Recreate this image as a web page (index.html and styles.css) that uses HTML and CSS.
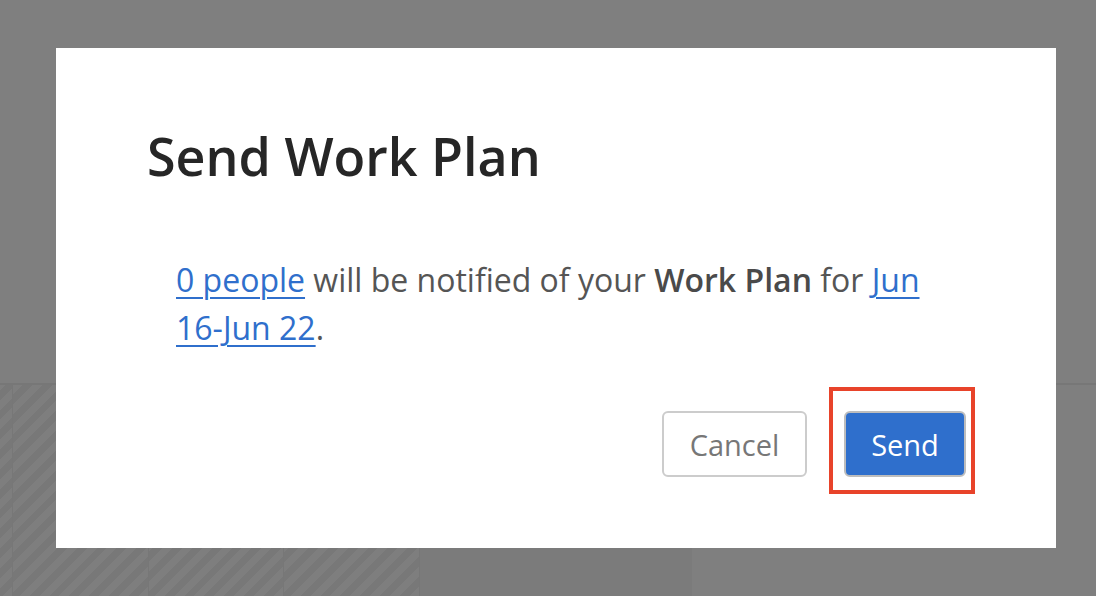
FILE: index.html
```html
<!DOCTYPE html>
<html lang="en">
<head>
<meta charset="utf-8">
<title>Send Work Plan</title>
<link rel="stylesheet" href="styles.css">
</head>
<body>
<div class="page">
  <div class="page-top"></div>
  <div class="page-bottom">
    <div class="grid">
      <div class="col col-narrow"></div>
      <div class="col"></div>
      <div class="col"></div>
      <div class="col"></div>
    </div>
    <div class="middle"></div>
    <div class="rest"></div>
  </div>
</div>
<div class="overlay">
  <div class="modal" role="dialog" aria-labelledby="modal-title">
    <h1 id="modal-title" class="modal-title">Send Work Plan</h1>
    <p class="modal-body"><a href="#" class="link">0 people</a> will be notified of your <strong>Work Plan</strong> for <a href="#" class="link">Jun 16-Jun 22</a>.</p>
    <div class="modal-actions">
      <button class="btn btn-cancel" type="button">Cancel</button>
      <span class="highlight">
        <button class="btn btn-send" type="button">Send</button>
      </span>
    </div>
  </div>
</div>
</body>
</html>
```

FILE: styles.css
```css
* { box-sizing: border-box; }
html, body { margin: 0; padding: 0; }
body {
  width: 1096px;
  height: 596px;
  overflow: hidden;
  font-family: "Open Sans", "Liberation Sans", sans-serif;
  background: #ffffff;
  position: relative;
}
.page {
  display: flex;
  flex-direction: column;
  height: 596px;
}
.page-top {
  height: 385px;
  background: #ffffff;
  border-bottom: 2px solid #eeeeee;
}
.page-bottom {
  flex: 1;
  display: flex;
}
.grid {
  width: 420px;
  display: flex;
  border-right: 1px solid #eeeeee;
}
.col {
  width: 136px;
  border-left: 1px solid #eeeeee;
  background: repeating-linear-gradient(-45deg, #fcfcfc 0 7px, #f1f1f1 7px 14px);
}
.col-narrow { width: 12px; border-left: none; }
.middle {
  width: 272px;
  background: #f6f6f6;
}
.rest { flex: 1; background: #ffffff; }

.overlay {
  position: absolute;
  inset: 0;
  background: rgba(0, 0, 0, 0.5);
  display: flex;
  align-items: center;
  padding-left: 56px;
}
.modal {
  width: 1000px;
  height: 500px;
  background: #ffffff;
  padding: 72px 90px 71px 91px;
  display: flex;
  flex-direction: column;
}
.modal-title {
  margin: 0;
  font-size: 52px;
  font-weight: 600;
  line-height: 72px;
  color: #262626;
}
.modal-body {
  margin: 64px 0 0 29px;
  width: 760px;
  font-size: 32px;
  line-height: 48px;
  color: #555555;
}
.modal-body strong { font-weight: 600; color: #4a4a4a; }
.link { color: #2f6fcc; text-decoration: underline; text-underline-offset: 5px; text-decoration-thickness: 2px; }
.modal-actions {
  margin-top: auto;
  display: flex;
  justify-content: flex-end;
  align-items: center;
  gap: 37px;
}
.btn {
  font-family: "Open Sans", "Liberation Sans", sans-serif;
  font-size: 29px;
  height: 66px;
  border-radius: 6px;
  padding: 0;
  cursor: pointer;
}
.btn-cancel {
  width: 145px;
  background: #ffffff;
  border: 2px solid #cccccc;
  color: #777777;
}
.btn-send {
  width: 122px;
  background: #2f6fcc;
  border: 2px solid #bdbdbd;
  color: #ffffff;
}
.highlight {
  position: relative;
  display: inline-flex;
}
.highlight::after {
  content: "";
  position: absolute;
  left: -15px;
  top: -24px;
  right: -9px;
  bottom: -17px;
  border: 4px solid #e8432a;
}
```
